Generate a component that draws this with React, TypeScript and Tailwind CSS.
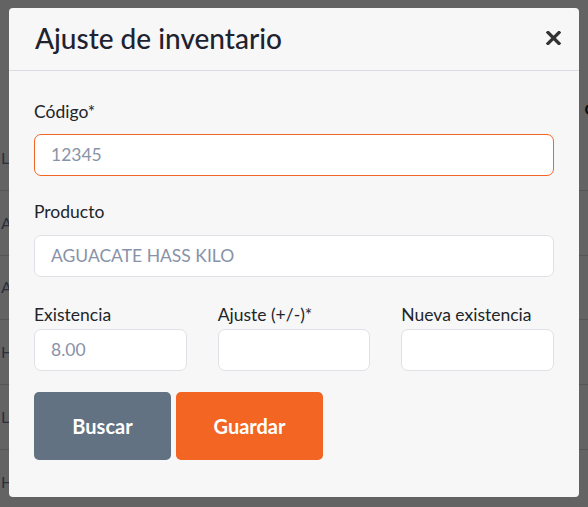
import React from "react";

const rows = ["LIMÓN PERSA KILO", "AGUACATE HASS KILO", "AJO MORADO KILO", "HUEVO BLANCO", "LECHUGA ROMANA", "HABANERO KILO"];

export default function App() {
  return (
    <div className="relative h-[507px] w-[588px] overflow-hidden bg-white font-['Lato',sans-serif]">
      {/* page behind */}
      <div className="pt-[92px]">
        <div className="flex h-[34px] items-center justify-between text-[16px] font-bold text-[#222]">
          <span className="-ml-[52px]">Código</span>
          <span className="-mr-[30px]">Cant</span>
        </div>
        {rows.map((r) => (
          <div key={r} className="flex h-[64.75px] items-center border-b border-[#dcdcdc] text-[16px] text-[#6b7a99]">
            <span className="ml-[1px]">{r}</span>
          </div>
        ))}
      </div>

      {/* overlay */}
      <div className="absolute inset-0 bg-black/[0.61]">
        <div className="ml-[9px] mt-[8px] w-[570px] rounded-[4px] bg-[#f7f7f7]">
          <div className="flex h-[63px] items-center justify-between border-b border-[#dcdce6] pl-[26px] pr-[18px]">
            <h1 className="pb-[2px] text-[28px] font-medium leading-none text-[#1f2330]">Ajuste de inventario</h1>
            <svg width="15" height="14" viewBox="0 0 15 14" className="mb-[2px]">
              <path d="M2 1.5 L13 12.5 M13 1.5 L2 12.5" stroke="#333" strokeWidth="3.2" strokeLinecap="square" />
            </svg>
          </div>
          <div className="px-[25px] pb-[37px] pt-[29px] text-[17.5px] text-[#212529]">
            <label className="block leading-6">Código*</label>
            <div className="mt-[10px] flex h-[42px] items-center rounded-[7px] border border-[#f26522] bg-white pl-[16px] text-[#8892a8]">
              12345
            </div>
            <label className="mt-[24px] block leading-6">Producto</label>
            <div className="mt-[11px] flex h-[42px] items-center rounded-[7px] border border-[#dfe1e6] bg-white pl-[16px] text-[#8892a8]">
              AGUACATE HASS KILO
            </div>
            <div className="mt-[26px] grid grid-cols-3 gap-x-[31px]">
              <div>
                <label className="block leading-6">Existencia</label>
                <div className="mt-[2px] flex h-[42px] items-center rounded-[7px] border border-[#dfe1e6] bg-white pl-[16px] text-[#8892a8]">
                  8.00
                </div>
              </div>
              <div>
                <label className="block leading-6">Ajuste (+/-)*</label>
                <div className="mt-[2px] h-[42px] rounded-[7px] border border-[#dfe1e6] bg-white" />
              </div>
              <div>
                <label className="block leading-6">Nueva existencia</label>
                <div className="mt-[2px] h-[42px] rounded-[7px] border border-[#dfe1e6] bg-white" />
              </div>
            </div>
            <div className="mt-[21px] flex gap-[5px]">
              <button className="h-[68px] w-[137px] rounded-[5px] bg-[#627282] text-[20px] font-bold text-white">Buscar</button>
              <button className="h-[68px] w-[147px] rounded-[5px] bg-[#f26522] text-[20px] font-bold text-white">Guardar</button>
            </div>
          </div>
        </div>
      </div>
    </div>
  );
}
